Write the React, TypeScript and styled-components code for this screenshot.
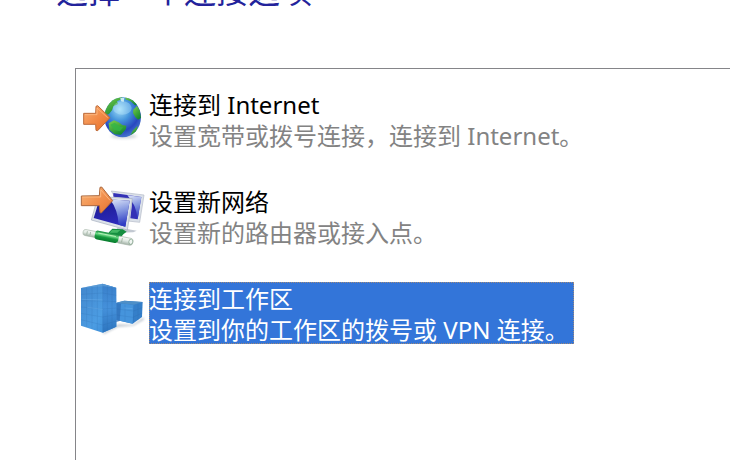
import React, { useState } from "react";
import styled, { createGlobalStyle } from "styled-components";

const GlobalStyle = createGlobalStyle`
  * { box-sizing: border-box; }
  body {
    margin: 0;
    background: #fff;
    overflow: hidden;
    font-family: "Noto Sans", "Noto Sans CJK SC", sans-serif;
  }
`;

const Page = styled.main`
  display: flex;
  flex-direction: column;
  min-height: 100vh;
`;

const Header = styled.header`
  display: flex;
  align-items: flex-end;
  height: 11px;
  margin-bottom: 57px;
  padding-left: 56px;
  overflow: hidden;
`;

const Title = styled.h1`
  flex: none;
  margin: 0;
  font-family: "Noto Sans CJK SC", sans-serif;
  font-size: 32px;
  font-weight: 400;
  line-height: 44px;
  color: #23239b;
  white-space: nowrap;
`;

const OptionList = styled.ul`
  flex: 1;
  display: flex;
  flex-direction: column;
  gap: 31px;
  margin: 0 0 0 75px;
  padding: 19px 4px;
  border: solid #858589;
  border-width: 1px 0 0 1px;
  list-style: none;
`;

const OptionButton = styled.button`
  display: flex;
  align-items: flex-start;
  gap: 3px;
  padding: 0;
  border: 0;
  background: none;
  font: inherit;
  text-align: left;
  outline: none;
`;

const Icon = styled.svg`
  flex: none;
  width: 66px;
  height: 66px;
`;

const Label = styled.span<{ $selected: boolean }>`
  display: flex;
  flex-direction: column;
  height: 62px;
  padding: 1px 5px 0 0;
  font-size: 24px;
  line-height: 31px;
  white-space: nowrap;
  color: ${(p) => (p.$selected ? "#fff" : "#000")};
  background: ${(p) => (p.$selected ? "#3375d9" : "transparent")};
  outline: ${(p) => (p.$selected ? "1px dotted #a08a78" : "none")};
  outline-offset: -1px;
`;

const Description = styled.span<{ $selected: boolean }>`
  color: ${(p) => (p.$selected ? "#fff" : "#838383")};
`;

const GlobeIcon = () => (
  <Icon viewBox="30 9 198 198" aria-hidden="true">
    <defs>
      <radialGradient id="sea" cx="0.42" cy="0.3" r="0.72">
        <stop offset="0" stopColor="#a6e0f8" />
        <stop offset="0.4" stopColor="#4595dc" />
        <stop offset="0.75" stopColor="#2848c0" />
        <stop offset="1" stopColor="#4878cc" />
      </radialGradient>
      <linearGradient id="arrowIn" x1="0" y1="0" x2="1" y2="1">
        <stop offset="0" stopColor="#f8b277" />
        <stop offset="0.5" stopColor="#f28b48" />
        <stop offset="1" stopColor="#e66b24" />
      </linearGradient>
      <linearGradient id="land" x1="0" y1="0" x2="0.6" y2="1">
        <stop offset="0" stopColor="#7ed04c" />
        <stop offset="1" stopColor="#168a32" />
      </linearGradient>
      <clipPath id="globeClip">
        <ellipse cx="158" cy="97" rx="55" ry="60" />
      </clipPath>
      <filter id="globeShade" x="-30%" y="-100%" width="160%" height="300%">
        <feGaussianBlur stdDeviation="4" />
      </filter>
    </defs>
    <ellipse cx="162" cy="154" rx="40" ry="6" fill="#6f7d91" opacity="0.35" filter="url(#globeShade)" />
    <ellipse cx="158" cy="97" rx="55" ry="60" fill="url(#sea)" />
    <g clipPath="url(#globeClip)" fill="url(#land)">
      <path d="M101 92 L104 60 L126 39 L158 35 L151 44 L141 49 L144 57 L130 64 L126 76 L117 87Z" />
      <path d="M166 34 L188 44 L202 59 L195 61 L182 49 L166 43Z" />
      <path d="M190 74 L201 62 L210 77 L213 99 L204 104 L196 97 L189 84Z" />
      <path d="M116 115 L132 106 L146 112 L157 120 L169 122 L168 132 L153 149 L134 148 L118 134Z" />
      <path d="M188 137 L203 122 L199 141 L181 151Z" />
    </g>
    <path d="M121 119 L134 113 L151 126 L160 127 L149 139 L132 134Z" fill="#35b546" opacity="0.8" />
    <path d="M151 39 L163 39 L161 51 L153 49Z" fill="#c8eaf1" />
    <ellipse cx="157" cy="69" rx="28" ry="20" fill="#c5edff" opacity="0.35" />
    <path
      d="M41 85 L77 85 L78 64 L83 62 L120 98 L83 137 L78 136 L77 118 L41 118Z"
      fill="url(#arrowIn)"
      stroke="#bd6c3c"
      strokeWidth="3"
      strokeLinejoin="round"
    />
    <path d="M45 89 H81 V69 L113 98" fill="none" stroke="#ffc38f" strokeWidth="2" />
  </Icon>
);

const NetworkIcon = () => (
  <Icon viewBox="30 15 198 198" aria-hidden="true">
    <defs>
      <linearGradient id="screen" x1="0" y1="0" x2="0.3" y2="1">
        <stop offset="0" stopColor="#1a188c" />
        <stop offset="1" stopColor="#2c2abb" />
      </linearGradient>
      <linearGradient id="glare" x1="0" y1="0" x2="0.2" y2="1">
        <stop offset="0" stopColor="#dfe6f8" />
        <stop offset="0.5" stopColor="#8497e0" />
        <stop offset="1" stopColor="#2f3cc4" />
      </linearGradient>
      <linearGradient id="arrowNew" x1="0" y1="0" x2="1" y2="1">
        <stop offset="0" stopColor="#f9b77b" />
        <stop offset="0.5" stopColor="#f29250" />
        <stop offset="1" stopColor="#e47330" />
      </linearGradient>
      <linearGradient id="cable" x1="0" y1="0" x2="0" y2="1">
        <stop offset="0" stopColor="#fafcfa" />
        <stop offset="0.5" stopColor="#dfe8e1" />
        <stop offset="1" stopColor="#a1b0a5" />
      </linearGradient>
      <linearGradient id="joint" x1="0" y1="0" x2="0" y2="1">
        <stop offset="0" stopColor="#138a3b" />
        <stop offset="0.35" stopColor="#6bd884" />
        <stop offset="0.6" stopColor="#169a3e" />
        <stop offset="1" stopColor="#087b2d" />
      </linearGradient>
    </defs>
    <path d="M140 143 L172 147 L200 152 L190 157 L145 158Z" fill="#c2c8d1" />
    <path d="M124 33 L222 45 L209 127 L174 123Z" fill="#dbe1e9" stroke="#b3bac7" strokeWidth="2" />
    <path d="M130 39 L214 51 L203 118 L181 115 L188 56 L130 50Z" fill="#3331b6" />
    <path d="M172 46 L214 51 L203 118 Q199 74 172 46Z" fill="url(#glare)" />
    <path d="M84 49 L187 56 L172 150 L64 120Z" fill="#dbe1e9" stroke="#a5aebd" strokeWidth="2" />
    <path d="M89 56 L179 62 L166 140 L71 114Z" fill="url(#screen)" />
    <path d="M120 58 L179 62 L166 140 L146 134 Q144 90 120 58Z" fill="url(#glare)" />
    <path d="M118 155 L127 146 L158 148 L170 155 L160 163 L148 178 L108 172Z" fill="#158e40" />
    <path d="M126 150 H151 L142 158 H119Z" fill="#43b865" />
    <g transform="rotate(11 115 171)">
      <rect x="38" y="162" width="44" height="18" rx="7" fill="url(#cable)" stroke="#a8b8ab" strokeWidth="2" />
      <rect x="140" y="162" width="50" height="21" rx="8" fill="url(#cable)" stroke="#a8b8ab" strokeWidth="2" />
      <rect x="74" y="158" width="72" height="27" rx="9" fill="url(#joint)" />
      <path d="M83 165 H137" stroke="#b5f1b7" strokeWidth="3" />
      <path d="M50 166 V176 M60 166 V176 M157 166 V179" stroke="#8fa592" strokeWidth="2" />
      <ellipse cx="184" cy="172" rx="6" ry="8" fill="#f0f5f1" stroke="#7d9f86" strokeWidth="2" />
    </g>
    <path
      d="M34 48 L88 47 L90 22 L95 21 L128 62 L94 99 L90 98 L88 77 L34 77Z"
      fill="url(#arrowNew)"
      stroke="#a9683f"
      strokeWidth="3"
      strokeLinejoin="round"
    />
    <path d="M37 51 H92 V29 L120 61" fill="none" stroke="#ffc795" strokeWidth="2" />
  </Icon>
);

const WorkplaceIcon = () => (
  <Icon viewBox="30 21 198 198" aria-hidden="true">
    <defs>
      <linearGradient id="towerFront" x1="0" y1="0" x2="1" y2="1">
        <stop offset="0" stopColor="#4286cc" />
        <stop offset="0.6" stopColor="#4c9de3" />
        <stop offset="1" stopColor="#3384d1" />
      </linearGradient>
      <linearGradient id="towerSide" x1="0" y1="0" x2="0" y2="1">
        <stop offset="0" stopColor="#397fca" />
        <stop offset="0.5" stopColor="#4591db" />
        <stop offset="1" stopColor="#2d75bf" />
      </linearGradient>
      <filter id="groundShade" x="-20%" y="-50%" width="140%" height="200%">
        <feGaussianBlur stdDeviation="3" />
      </filter>
    </defs>
    <path d="M97 174 L145 148 L188 149 L221 127 L221 135 L190 152 L143 156 L103 177Z" fill="#78899b" opacity="0.45" filter="url(#groundShade)" />
    <path d="M139 83 L163 77 L218 81 L216 126 L188 146 L139 135Z" fill="#357fc9" />
    <path d="M139 84 L191 89 L188 146 L139 135Z" fill="#4594dc" />
    <path d="M139 83 L163 77 L218 81 L191 89Z" fill="#4e8fc7" />
    <path d="M138 84 L153 86 L149 138 L138 142Z" fill="#2b69b2" opacity="0.65" />
    <path d="M33 39 L98 26 L138 38 L139 155 L98 173 L33 152Z" fill="url(#towerFront)" />
    <path d="M98 27 L139 38 L139 155 L98 173Z" fill="url(#towerSide)" />
    <path d="M33 39 L98 26 L138 38 L101 34Z" fill="#65a3d8" opacity="0.65" />
    <g fill="none" stroke="#235f9f" strokeWidth="1" opacity="0.45">
      <path d="M50 37 V156 M66 34 V162 M82 31 V167 M98 27 V172 M112 31 V166 M126 35 V160" />
      <path d="M33 58 L98 54 L139 61 M33 77 L98 78 L139 80 M33 96 L98 102 L139 99 M33 115 L98 126 L139 119 M33 134 L98 150 L139 138" />
      <path d="M165 88 V140 M190 90 V145 M204 86 V135 M140 102 L190 108 L217 98 M140 120 L189 127 L216 114" />
    </g>
    <path d="M35 73 L98 75 M52 97 L98 103 M163 99 L188 101" stroke="#88c5fa" strokeWidth="3" opacity="0.25" />
  </Icon>
);

const options = [
  { title: "连接到 Internet", text: "设置宽带或拨号连接，连接到 Internet。", Art: GlobeIcon },
  { title: "设置新网络", text: "设置新的路由器或接入点。", Art: NetworkIcon },
  { title: "连接到工作区", text: "设置到你的工作区的拨号或 VPN 连接。", Art: WorkplaceIcon },
];

export default function App() {
  const [selected, setSelected] = useState(2);
  return (
    <Page lang="zh-CN">
      <GlobalStyle />
      <Header>
        <Title>选择一个连接选项</Title>
      </Header>
      <OptionList>
        {options.map(({ title, text, Art }, i) => (
          <li key={title}>
            <OptionButton type="button" aria-pressed={i === selected} onClick={() => setSelected(i)}>
              <Art />
              <Label $selected={i === selected}>
                <span>{title}</span>
                <Description $selected={i === selected}>{text}</Description>
              </Label>
            </OptionButton>
          </li>
        ))}
      </OptionList>
    </Page>
  );
}
